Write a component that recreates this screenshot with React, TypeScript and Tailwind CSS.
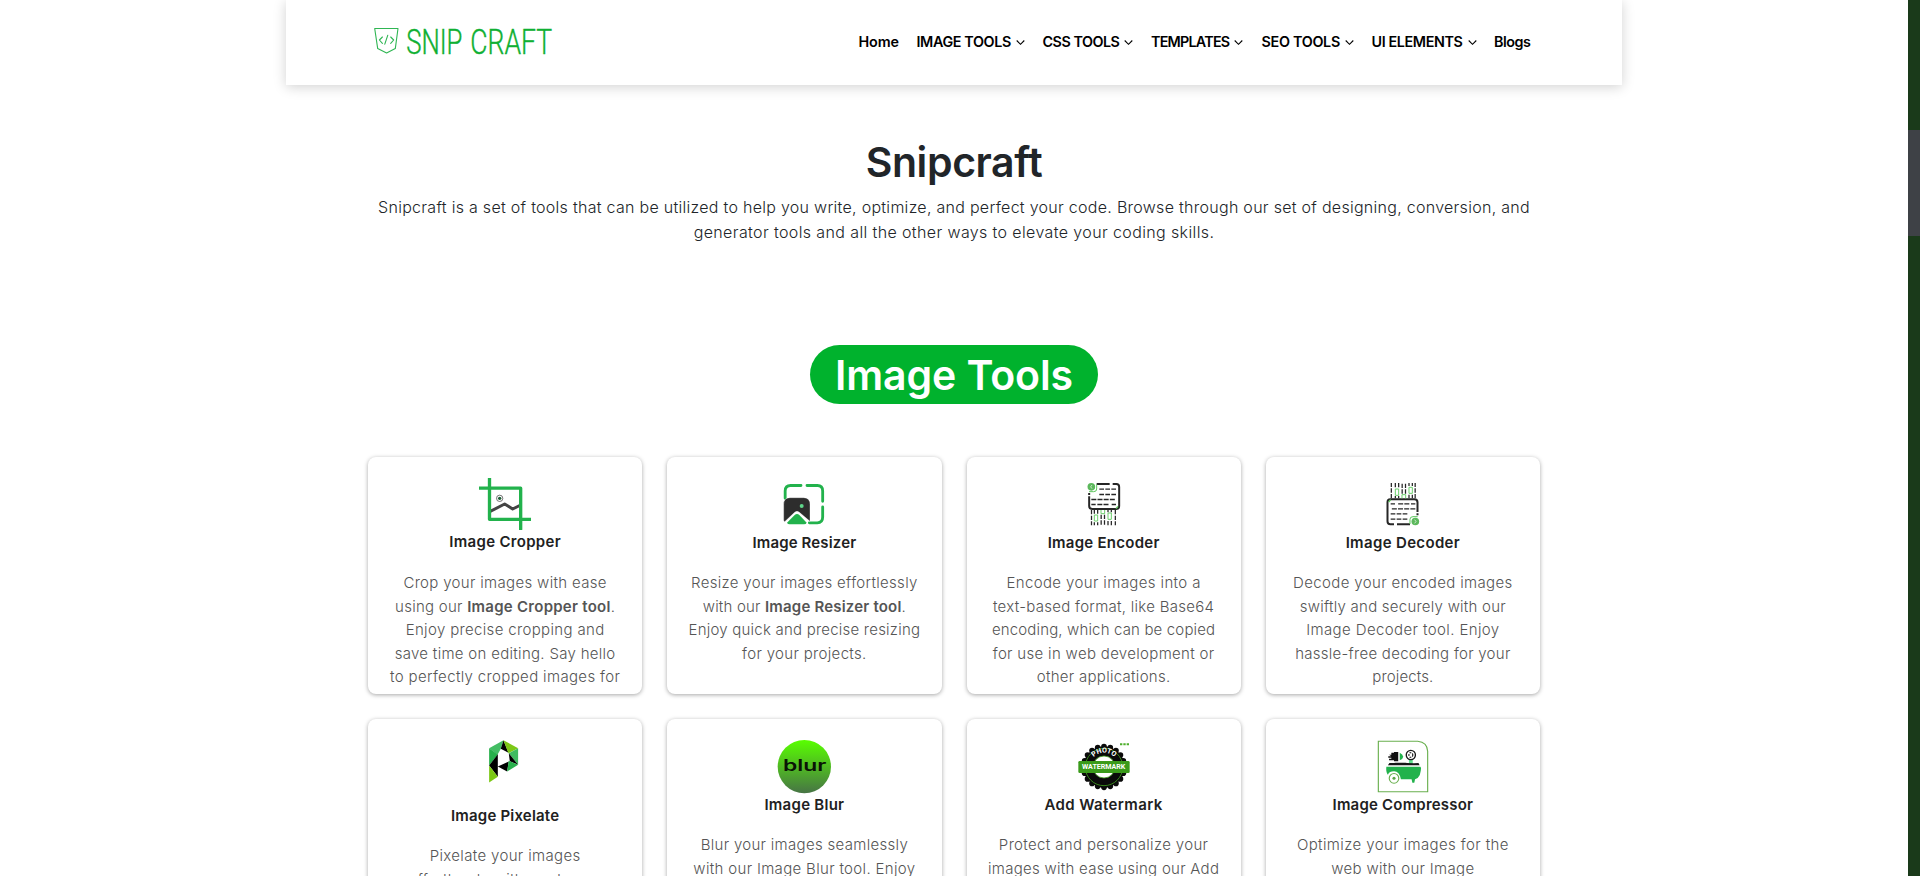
import type { ReactNode } from 'react';

type Line = { t: ReactNode; c: string };
type Tool = { name: string; nameClass: string; icon: ReactNode; tall?: boolean; lines: Line[] };

const GREEN = '#22b24c';

function Logo() {
  return (
    <svg className="block h-[32px] w-[180px] -translate-y-px" viewBox="0 0 180 32" fill="none">
      <g stroke="#2fb653" strokeWidth="1.100" strokeLinejoin="round" strokeLinecap="round">
        <path d="M.7 3.500H24L21.300 23.600 12.600 28 3.700 23.600Z" />
        <path d="M8.400 12 5.400 15l3 3.300M16.700 12l3 3-3 3.300M13.800 10.200l-3 9" />
      </g>
      <text transform="translate(32.200 28.500) scale(.72 1)" fontFamily="Roboto" fontWeight="300" fontSize="36" fill="#0fb033" stroke="#0fb033" strokeWidth=".4" textLength="78" lengthAdjust="spacingAndGlyphs">SNIP</text>
      <text transform="translate(96.300 28.500) scale(.72 1)" fontFamily="Roboto" fontWeight="300" fontSize="36" fill="#0fb033" stroke="#0fb033" strokeWidth=".4" textLength="113.500" lengthAdjust="spacingAndGlyphs">CRAFT</text>
    </svg>
  );
}

function CropperIcon() {
  return (
    <svg className="size-[52px]" viewBox="357 99 156 156" fill="none">
      <path d="M389 200 434 177 458 192 482 180" stroke="#444" strokeWidth="9" strokeLinejoin="round" />
      <circle cx="419" cy="160" r="9.500" stroke="#333" strokeWidth="2" />
      <circle cx="419" cy="160" r="5" fill="#1c5a34" />
      <path d="M388.500 100V223H512M358 129.500H482V253" stroke={GREEN} strokeWidth="10" strokeLinejoin="round" strokeLinecap="round" />
    </svg>
  );
}

function ResizerIcon() {
  return (
    <svg className="size-[52px]" viewBox="356 99 156 156" fill="none">
      <path d="M377.500 160V138Q377.500 121.500 394 121.500H425M443 121.500H474Q490 121.500 490 138V169M490 186V216Q490 233 474 233.500H450" stroke={GREEN} strokeWidth="8.500" strokeLinecap="round" />
      <path d="M373 226V178Q373 158 392 158H433Q452 158 452 178V229L420 202Q413 196 406 202L376 230Q373 229 373 226Z" fill="#2d2d2d" stroke="#fff" strokeWidth="1" />
      <path d="M383 233 406 210Q413 204 420 210L442 233Q440 238 434 238H391Q385 238 383 233Z" fill={GREEN} />
      <circle cx="427" cy="183" r="6" fill="#5fd58a" />
    </svg>
  );
}

function CodeDoc() {
  return (
    <g fill="none" strokeLinecap="butt">
      <path d="M409 116H448M457 116H468Q476.500 116 476.500 125V182Q476.500 191 468 191H396Q386.500 191 386.500 182V153M386.500 149V143" stroke="#262626" strokeWidth="6" />
      <path d="M417 131.500H467M417 147.500H467" stroke="#262626" strokeWidth="4.200" strokeDasharray="14 4" />
      <path d="M393 162.500H467M393 177.500H406M411 177.500H448M454 177.500H467" stroke="#262626" strokeWidth="4.200" strokeDasharray="15 3.500" />
      <circle cx="393" cy="124.500" r="11.500" fill="#5cb85c" />
      <path d="M395 119 391 124.500 395 130" stroke="#fff" strokeWidth="2" />
      <path d="M409 117V131Q409 139 400 139H386" stroke="#5cc75c" strokeWidth="3" />
      <path d="M473 183 467 190" stroke="#5cc75c" strokeWidth="4" />
      <path d="M393.500 194V240M402 194V205M402 231V240M412 194V205M412 231V240M422.500 208V240M432.500 208V240M443 194V201M443 227V240M453 194V201M453 227V240M465 194V240" stroke="#262626" strokeWidth="3.800" strokeDasharray="13 4" />
      <path d="M402 209H412V227H402ZM443 203H453V222H443ZM422 194V205H433V194" stroke="#6ccf6c" strokeWidth="3" />
    </g>
  );
}

function EncoderIcon() {
  return (
    <svg className="size-[52px]" viewBox="353 98 156 156">
      <CodeDoc />
    </svg>
  );
}

function DecoderIcon() {
  return (
    <svg className="size-[52px]" viewBox="353 98 156 156">
      <g transform="rotate(180 430.500 176.500)">
        <CodeDoc />
      </g>
    </svg>
  );
}

function PixelateIcon() {
  return (
    <svg className="size-[52px]" viewBox="162.600 29.500 156 156">
      <path d="M193 54 236 30 228 56 218 74Z" fill="#43bd64" />
      <path d="M193 54 219 73 193 106Z" fill="#27b04b" />
      <path d="M236 30 228 56 251 68Z" fill="#000" />
      <path d="M236 30 280 54 251 69Z" fill="#7cc816" />
      <path d="M280 54V104L252 69Z" fill="#3fbb60" />
      <path d="M252 69 280 104 255 93Z" fill="#000" />
      <path d="M219 72V140L193 106Z" fill="#000" />
      <path d="M193 106 219 140 193 157Z" fill="#7cc816" />
      <path d="M219 109 252 94 247 124Z" fill="#000" />
      <path d="M252 92 280 104 247 124Z" fill="#27b04b" />
    </svg>
  );
}

function BlurIcon() {
  return (
    <svg className="size-[52px] overflow-visible" viewBox="-1 -1 156 156">
      <defs>
        <linearGradient id="blurFill" x1="0" y1="0" x2="0" y2="1">
          <stop offset="0" stopColor="#58ff00" />
          <stop offset="1" stopColor="#477445" />
        </linearGradient>
      </defs>
      <circle cx="78" cy="79" r="80" fill="url(#blurFill)" />
      <text x="14" y="93" fontFamily="Inter" fontWeight="600" fontSize="47" textLength="130" lengthAdjust="spacingAndGlyphs" fill="#0a1405">blur</text>
    </svg>
  );
}

const teeth = Array.from({ length: 20 }, (_, i) => {
  const a = (i * Math.PI) / 10;
  return { x: 78 + 61 * Math.cos(a), y: 80 + 61 * Math.sin(a) };
});

function WatermarkIcon() {
  return (
    <svg className="size-[52px] overflow-visible" viewBox="0 -1 156 156">
      <circle cx="78" cy="80" r="62" fill="#0a0a0a" />
      {teeth.map((p, i) => (
        <circle key={i} cx={p.x} cy={p.y} r="8.500" fill="#0a0a0a" />
      ))}
      <circle cx="78" cy="80" r="56" fill="none" stroke="#3f9a1e" strokeWidth="2.500" />
      <circle cx="78" cy="80" r="33" fill="#fff" stroke="#3f9a1e" strokeWidth="2.500" />
      <path id="photoArc" d="M37 67A43 43 0 0 1 119 67" fill="none" />
      <text fontFamily="Roboto" fontWeight="700" fontSize="21" fill="#fff" textAnchor="middle">
        <textPath href="#photoArc" startOffset="50%">PHOTO</textPath>
      </text>
      <rect x="1" y="62" width="154" height="36" rx="4" fill="#3a9b1a" />
      <text x="12" y="87.500" fontFamily="Roboto" fontWeight="700" fontSize="20" textLength="130" lengthAdjust="spacingAndGlyphs" fill="#fff">WATERMARK</text>
      <path d="M126 9h7v6h-7zM136 9h7v6h-7zM146 9h7v6h-7z" fill="#4fae2c" />
    </svg>
  );
}

function CompressorIcon() {
  return (
    <svg className="size-[52px] overflow-visible" viewBox="1089.500 120 136 156" preserveAspectRatio="none" fill="none">
      <path d="M1093 124H1196Q1221 127 1222 154V275H1093Z" stroke="#6ab04f" strokeWidth="3" fill="#fff" />
      <path d="M1121 164H1127V158H1134V156H1145V184H1134V181H1121V176H1127V173H1119V169H1127Z" fill="#111" />
      <path d="M1149 158Q1157 162 1158 170 1157 178 1149 181Z" fill={GREEN} />
      <path d="M1173 178H1183V192H1173Z" fill="#5fe08d" />
      <ellipse cx="1178" cy="165" rx="12" ry="14" fill="#fff" stroke="#1a1a1a" strokeWidth="3.500" />
      <ellipse cx="1178" cy="165" rx="5" ry="7" stroke="#333" strokeWidth="3.500" strokeDasharray="5 3" />
      <path d="M1118 196 1122 189H1134L1138 188H1164L1168 189 1186 190 1198 189 1201 196Z" fill="#161616" />
      <path d="M1114 200H1203Q1206 202 1204 212 1203 226 1196 234L1189 238 1187 248H1182L1180 238H1152Q1148 214 1134 214 1122 214 1118 224 1112 216 1114 200Z" fill={GREEN} />
      <ellipse cx="1134" cy="235" rx="12.500" ry="14.500" fill="#fff" stroke="#6ab04f" strokeWidth="3" />
      <ellipse cx="1134" cy="235" rx="4" ry="4.500" fill="#5aa646" />
    </svg>
  );
}

function ChevronDown() {
  return (
    <svg className="h-[5px] w-[9px] overflow-visible" viewBox="0 0 9 5" fill="none">
      <path d="M.7.500 4.500 4.300 8.300.5" stroke="#000" strokeWidth="1.100" />
    </svg>
  );
}

const nav = [
  { label: 'Home', box: 'w-[58px]', c: 'tracking-[-0.1px]', menu: false },
  { label: 'IMAGE TOOLS', box: 'w-[126px]', c: 'tracking-[-0.39px]', menu: true },
  { label: 'CSS TOOLS', box: 'w-[108.500px]', c: 'tracking-[-0.49px]', menu: true },
  { label: 'TEMPLATES', box: 'w-[110.500px]', c: 'tracking-[-0.78px]', menu: true },
  { label: 'SEO TOOLS', box: 'w-[110px]', c: 'tracking-[-0.3px]', menu: true },
  { label: 'UI ELEMENTS', box: 'w-[122.500px]', c: 'tracking-[-0.38px]', menu: true },
  { label: 'Blogs', box: 'w-[46px]', c: 'tracking-[-0.5px]', menu: false },
];

const tools: Tool[] = [
  {
    name: 'Image Cropper', nameClass: 'tracking-[0.3px]', icon: <CropperIcon />,
    lines: [
      { t: 'Crop your images with ease', c: 'tracking-[0.33px]' },
      { t: <>using our <b className="font-semibold">Image Cropper tool</b>.</>, c: 'tracking-[0.26px]' },
      { t: 'Enjoy precise cropping and', c: 'tracking-[0.34px]' },
      { t: 'save time on editing. Say hello', c: 'tracking-[0.3px]' },
      { t: 'to perfectly cropped images for', c: 'tracking-[0.35px]' },
    ],
  },
  {
    name: 'Image Resizer', nameClass: 'pt-px tracking-[0.14px]', icon: <ResizerIcon />,
    lines: [
      { t: 'Resize your images effortlessly', c: 'tracking-[0.32px]' },
      { t: <>with our <b className="font-semibold">Image Resizer tool</b>.</>, c: 'tracking-[0.19px]' },
      { t: 'Enjoy quick and precise resizing', c: 'tracking-[0.22px]' },
      { t: 'for your projects.', c: 'tracking-[0.33px]' },
    ],
  },
  {
    name: 'Image Encoder', nameClass: 'pt-px tracking-[0.26px]', icon: <EncoderIcon />,
    lines: [
      { t: 'Encode your images into a', c: 'tracking-[0.38px]' },
      { t: 'text-based format, like Base64', c: 'tracking-[0.28px]' },
      { t: 'encoding, which can be copied', c: 'tracking-[0.15px]' },
      { t: 'for use in web development or', c: 'tracking-[0.32px]' },
      { t: 'other applications.', c: 'tracking-[0.29px]' },
    ],
  },
  {
    name: 'Image Decoder', nameClass: 'pt-px tracking-[0.34px]', icon: <DecoderIcon />,
    lines: [
      { t: 'Decode your encoded images', c: 'tracking-[0.36px]' },
      { t: 'swiftly and securely with our', c: 'tracking-[0.24px]' },
      { t: 'Image Decoder tool. Enjoy', c: 'tracking-[0.39px]' },
      { t: 'hassle-free decoding for your', c: 'tracking-[0.27px]' },
      { t: 'projects.', c: 'tracking-[0.12px]' },
    ],
  },
  {
    name: 'Image Pixelate', nameClass: 'pt-px tracking-[0.2px]', icon: <PixelateIcon />, tall: true,
    lines: [
      { t: 'Pixelate your images', c: 'tracking-[0.35px]' },
      { t: 'effortlessly with our Image', c: 'tracking-[0.3px]' },
    ],
  },
  {
    name: 'Image Blur', nameClass: 'pt-px tracking-[0.26px]', icon: <BlurIcon />,
    lines: [
      { t: 'Blur your images seamlessly', c: 'tracking-[0.31px]' },
      { t: 'with our Image Blur tool. Enjoy', c: 'tracking-[0.33px]' },
    ],
  },
  {
    name: 'Add Watermark', nameClass: 'pt-px tracking-[0.38px]', icon: <WatermarkIcon />,
    lines: [
      { t: 'Protect and personalize your', c: 'tracking-[0.35px]' },
      { t: 'images with ease using our Add', c: 'tracking-[0.27px]' },
    ],
  },
  {
    name: 'Image Compressor', nameClass: 'pt-px tracking-[0.2px]', icon: <CompressorIcon />,
    lines: [
      { t: 'Optimize your images for the', c: 'tracking-[0.39px]' },
      { t: 'web with our Image', c: 'tracking-[0.31px]' },
    ],
  },
];

function ToolCard({ tool }: { tool: Tool }) {
  return (
    <article className="flex h-[237px] flex-col items-center overflow-hidden rounded-[8px] bg-white pt-[21px] shadow-[0_1px_4px_rgba(0,0,0,0.35)]">
      <div className={tool.tall ? 'h-[63px]' : 'h-[52px]'}>{tool.icon}</div>
      <h3 className={`h-6 text-[15px] leading-6 font-semibold whitespace-nowrap text-[#212121] ${tool.nameClass}`}>{tool.name}</h3>
      <p className="mt-[17px] text-center text-[15px] leading-[23.5px] font-light whitespace-nowrap text-[#555]">
        {tool.lines.map((l, i) => (
          <span key={i} className={`block ${l.c}`}>{l.t}</span>
        ))}
      </p>
    </article>
  );
}

export default function App() {
  return (
    <div className="flex h-[876px] overflow-hidden bg-white font-['Inter','Liberation_Sans',sans-serif]">
      <main className="flex min-w-0 flex-1 flex-col items-center">
        <header className="flex h-[85px] w-[1336px] shrink-0 items-center justify-between bg-white pr-[82px] pb-px pl-[88px] shadow-[0_2px_12px_rgba(0,0,0,0.18)]">
          <Logo />
          <nav className="flex text-[14.35px] leading-5 font-semibold whitespace-nowrap text-black">
            {nav.map((n) => (
              <a key={n.label} className={`flex shrink-0 items-center gap-[5px] ${n.box} ${n.c}`}>
                {n.label}
                {n.menu && <ChevronDown />}
              </a>
            ))}
          </nav>
        </header>

        <h1 className="mt-[53px] h-12 shrink-0 text-[41px] leading-[48px] font-semibold tracking-[-0.4px] text-[#212529]">Snipcraft</h1>
        <p className="mt-[9px] shrink-0 text-center text-base leading-[25px] font-light whitespace-nowrap text-[#212529]">
          <span className="block tracking-[0.28px]">Snipcraft is a set of tools that can be utilized to help you write, optimize, and perfect your code. Browse through our set of designing, conversion, and</span>
          <span className="block tracking-[0.38px]">generator tools and all the other ways to elevate your coding skills.</span>
        </p>

        <h2 className="mt-[100px] flex h-[59px] w-[288px] shrink-0 items-center justify-center rounded-full bg-[#00b22d] pt-px text-[41px] leading-none font-semibold tracking-[-0.1px] whitespace-nowrap text-white">Image Tools</h2>

        <section className="mt-[53px] grid w-[1172px] shrink-0 grid-cols-4 gap-[25px]">
          {tools.map((t) => (
            <ToolCard key={t.name} tool={t} />
          ))}
        </section>
      </main>
      <aside className="w-3 shrink-0 bg-[#1a3a1a] pt-[130px]">
        <div className="h-[106px] bg-[#3e4146]" />
      </aside>
    </div>
  );
}
